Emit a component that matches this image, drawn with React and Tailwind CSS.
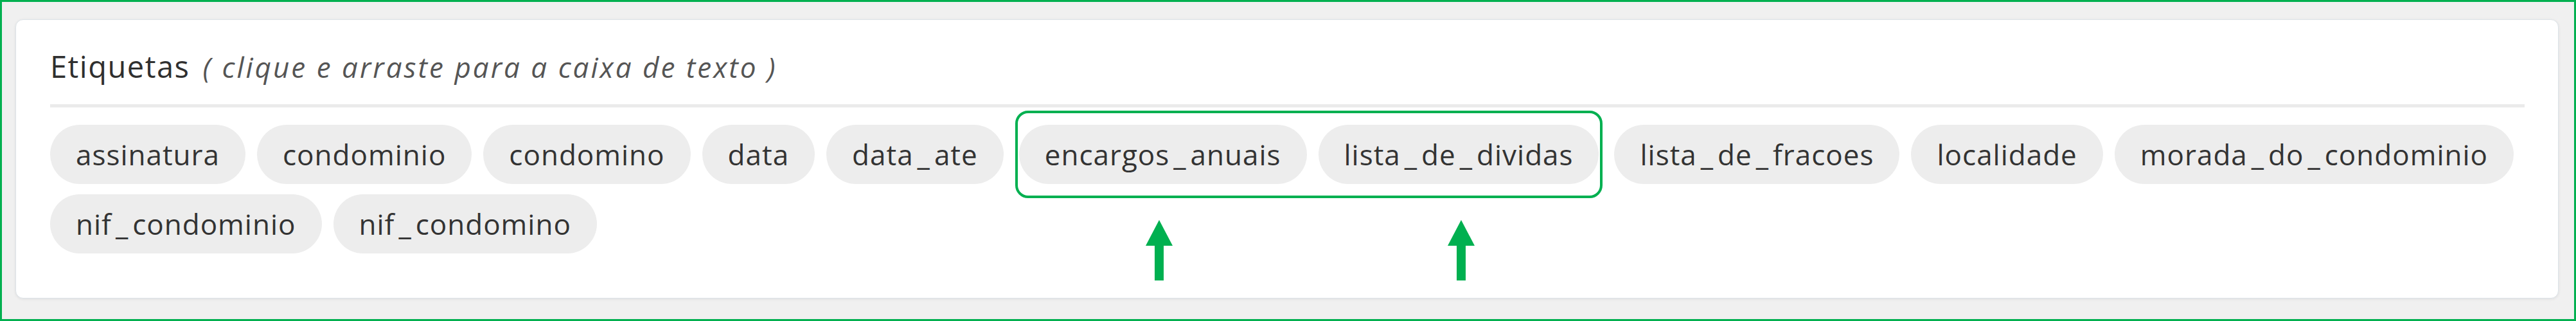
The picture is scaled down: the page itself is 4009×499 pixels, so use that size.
import React from "react";

// Tag chips panel ("Etiquetas") with two tags highlighted by an annotation box
const tags = [
  "assinatura",
  "condominio",
  "condomino",
  "data",
  "data_ate",
  "encargos_anuais",
  "lista_de_dividas",
  "lista_de_fracoes",
  "localidade",
  "morada_do_condominio",
  "nif_condominio",
  "nif_condomino",
];

const highlighted = [
  { label: "encargos_anuais", arrow: "ml-[-12px]" },
  { label: "lista_de_dividas", arrow: "ml-[8px]" },
];

function Chip({ label }) {
  // underscores in the original font are much wider, so pad them a bit
  const parts = label.split("_");
  return (
    <div className="h-[92px] flex items-center px-[40px] rounded-full bg-[#ededed] text-[44px] font-medium tracking-[1px] text-[#333] leading-none whitespace-nowrap cursor-grab select-none">
      {parts.map((p, i) => (
        <React.Fragment key={i}>
          {i > 0 && <span className="mx-[6px]">_</span>}
          {p}
        </React.Fragment>
      ))}
    </div>
  );
}

function UpArrow({ className = "" }) {
  return (
    <svg
      className={className}
      width="42"
      height="94"
      viewBox="0 0 42 94"
      fill="#00b050"
    >
      <polygon points="21,0 42,40 28,40 28,94 14,94 14,40 0,40" />
    </svg>
  );
}

export default function App() {
  const before = tags.slice(0, tags.indexOf(highlighted[0].label));
  const after = tags.slice(tags.indexOf(highlighted[1].label) + 1);

  return (
    <div
      className="w-full h-[499px] box-border border-[3px] border-[#00b050] bg-[#f0f0f0] pl-[21px] pt-[27px] pr-[24px] pb-[32px]"
      style={{ fontFamily: '"Open Sans", "Liberation Sans", sans-serif' }}
    >
      <div className="h-full bg-white rounded-[12px] border border-[#dde3e8] shadow-[0_1px_4px_rgba(0,0,0,0.08)] pl-[53px] pr-[52px] pt-[49px]">
        <div className="flex items-baseline leading-none whitespace-nowrap">
          <span className="text-[47px] font-medium tracking-[1.5px] text-[#2f2f2f]">
            Etiquetas
          </span>
          <span className="ml-[20px] text-[44px] italic tracking-[3px] text-[#555]">
            ( clique e arraste para a caixa de texto )
          </span>
        </div>

        <div className="mt-[35px] h-[5px] bg-[#ebebeb]" />

        <div className="mt-[27px] flex flex-wrap gap-x-[18px] gap-y-[16px]">
          {before.map((t) => (
            <Chip key={t} label={t} />
          ))}

          <div className="flex gap-x-[18px] border-[4px] border-[#00b050] rounded-[20px] px-[2px] py-[18px] my-[-22px]">
            {highlighted.map((h) => (
              <div key={h.label} className="relative">
                <Chip label={h.label} />
                <div className="absolute top-[148px] left-0 right-0 flex justify-center">
                  <UpArrow className={h.arrow} />
                </div>
              </div>
            ))}
          </div>

          {after.map((t) => (
            <Chip key={t} label={t} />
          ))}
        </div>
      </div>
    </div>
  );
}
